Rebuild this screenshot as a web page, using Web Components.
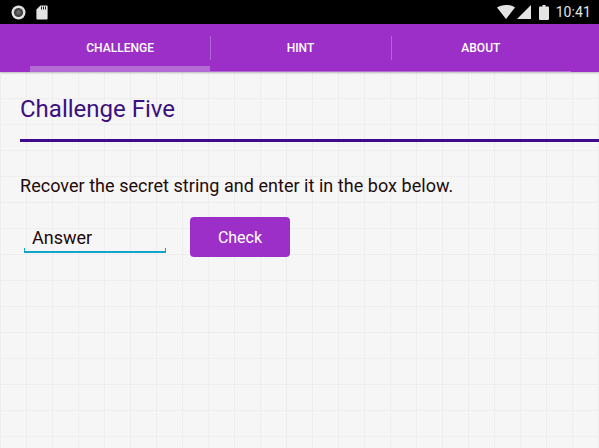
<!DOCTYPE html>
<html>
<head>
<meta charset="utf-8">
<style>
html, body { margin: 0; padding: 0; }
body { width: 599px; height: 448px; overflow: hidden; font-family: Roboto, "Liberation Sans", sans-serif; }
</style>
</head>
<body>
<ctf-app>
  <status-bar time="10:41"></status-bar>
  <tab-bar>
    <tab-item active>CHALLENGE</tab-item>
    <tab-item>HINT</tab-item>
    <tab-item>ABOUT</tab-item>
  </tab-bar>
  <challenge-page heading="Challenge Five">
    Recover the secret string and enter it in the box below.
  </challenge-page>
</ctf-app>

<script>
class CtfApp extends HTMLElement {
  constructor() {
    super();
    this.attachShadow({ mode: 'open' }).innerHTML = `
      <style>
        :host { display: flex; flex-direction: column; width: 599px; height: 448px; overflow: hidden; }
      </style>
      <slot></slot>`;
  }
}

class StatusBar extends HTMLElement {
  constructor() {
    super();
    this.attachShadow({ mode: 'open' }).innerHTML = `
      <style>
        :host { display: flex; align-items: center; height: 24px; background: #000; padding: 0 8px 0 11px; flex: none; }
        .left { display: flex; align-items: center; gap: 10px; flex: 1; }
        .right { display: flex; align-items: center; }
        .time { font-size: 14px; color: #e4e4e4; margin-left: 7px; letter-spacing: .1px; }
        svg { display: block; }
      </style>
      <div class="left">
        <svg width="15" height="15" viewBox="0 0 15 15">
          <circle cx="7.5" cy="7.5" r="7" fill="#e4e4e4"/>
          <circle cx="7.5" cy="7.5" r="4.600" fill="#444"/>
          <circle cx="7.500" cy="7.500" r="2.200" fill="#6a6a6a"/>
        </svg>
        <svg width="12" height="15" viewBox="0 0 12 15">
          <path d="M4.500 0.500H10.600a1 1 0 0 1 1 1V13.600a1 1 0 0 1-1 1H1.400a1 1 0 0 1-1-1V4.600Z" fill="#e4e4e4"/>
          <path d="M5 1.500h1v3H5zM7 1.500h1v3H7zM9 1.500h1v3H9z" fill="#222"/>
        </svg>
      </div>
      <div class="right">
        <svg width="18" height="14" viewBox="0 0 18 14" style="margin-right:2px">
          <path d="M0 2.600C2.400 .9 5.600 0 9 0s6.600 .9 9 2.600L9 14Z" fill="#e4e4e4"/>
        </svg>
        <svg width="14" height="14" viewBox="0 0 14 14" style="margin-right:8px">
          <path d="M0 14L14 0V14Z" fill="#e4e4e4"/>
        </svg>
        <svg width="10" height="15" viewBox="0 0 10 15">
          <path d="M3.500 0H6.500V1.500H9a1 1 0 0 1 1 1V14a1 1 0 0 1-1 1H1a1 1 0 0 1-1-1V2.500a1 1 0 0 1 1-1H3.500Z" fill="#e4e4e4"/>
        </svg>
        <span class="time">${this.getAttribute('time')}</span>
      </div>`;
  }
}

class TabBar extends HTMLElement {
  constructor() {
    super();
    this.attachShadow({ mode: 'open' }).innerHTML = `
      <style>
        :host { display: flex; height: 48px; background: #9c2fc7; padding: 0 28px 0 30px; flex: none;
          position: relative; z-index: 1; box-shadow: 0 1px 2px rgba(0,0,0,.22); }
      </style>
      <slot></slot>`;
  }
}

class TabItem extends HTMLElement {
  constructor() {
    super();
    this.attachShadow({ mode: 'open' }).innerHTML = `
      <style>
        :host { display: flex; flex: 1; align-items: center; justify-content: center; position: relative;
          color: #fff; font-size: 12px; font-weight: 500; letter-spacing: .02px; }
        :host(:not(:last-child))::after { content: ""; position: absolute; right: -1px; top: 12px; height: 24px; width: 1px; background: #b266d4; }
        :host::before { content: ""; position: absolute; left: 0; right: 0; bottom: 0; height: 1px; background: #b36cd4; }
        :host([active])::before { height: 6px; }
      </style>
      <slot></slot>`;
  }
}

class ChallengePage extends HTMLElement {
  constructor() {
    super();
    this.attachShadow({ mode: 'open' }).innerHTML = `
      <style>
        :host { display: block; flex: 1; padding: 23px 0 0 20px; color: #1f0a0a;
          background-color: #f7f7f7;
          background-image:
            linear-gradient(#eeeeee 1px, transparent 1px),
            linear-gradient(90deg, #eeeeee 1px, transparent 1px),
            linear-gradient(#f5f5f5 1px, transparent 1px),
            linear-gradient(90deg, #f5f5f5 1px, transparent 1px);
          background-size: 26px 26px, 26px 26px, 3px 3px, 3px 3px;
          background-position: 0 0; }
        h1 { margin: 0; font-size: 24px; font-weight: 400; line-height: 28px; color: #3c0f80; }
        hr { margin: 16px 0 0; border: 0; height: 3px; background: #3f0a8c; }
        p { margin: 33px 0 0; font-size: 18px; line-height: 22px; letter-spacing: .036px; }
        .row { display: flex; align-items: flex-start; gap: 24px; margin: 20px 0 0 4px; }
      </style>
      <h1>${this.getAttribute('heading')}</h1>
      <hr>
      <p><slot></slot></p>
      <div class="row">
        <answer-field placeholder="Answer"></answer-field>
        <check-button>Check</check-button>
      </div>`;
  }
}

class AnswerField extends HTMLElement {
  constructor() {
    super();
    this.attachShadow({ mode: 'open' }).innerHTML = `
      <style>
        :host { display: block; width: 142px; height: 36px; box-sizing: border-box; padding: 10px 0 0 8px; position: relative;
          font-size: 18px; line-height: 21px; color: #1f0a0a; }
        .line { position: absolute; left: 0; right: 0; bottom: 0; height: 5px; box-sizing: border-box;
          border: 1px solid #12a3c9; border-top: 0; border-bottom-width: 2px; }
      </style>
      <span>${this.getAttribute('placeholder')}</span>
      <div class="line"></div>`;
  }
}

class CheckButton extends HTMLElement {
  constructor() {
    super();
    this.attachShadow({ mode: 'open' }).innerHTML = `
      <style>
        :host { display: flex; align-items: center; justify-content: center; width: 100px; height: 40px;
          background: #9c2fc7; border-radius: 4px; color: #fff; font-size: 16px; }
      </style>
      <slot></slot>`;
  }
}

customElements.define('ctf-app', CtfApp);
customElements.define('status-bar', StatusBar);
customElements.define('tab-bar', TabBar);
customElements.define('tab-item', TabItem);
customElements.define('challenge-page', ChallengePage);
customElements.define('answer-field', AnswerField);
customElements.define('check-button', CheckButton);
</script>
</body>
</html>
